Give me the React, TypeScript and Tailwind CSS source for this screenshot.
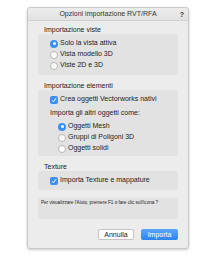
import React from 'react';

const Radio = ({ checked }: { checked?: boolean }) =>
  checked ? (
    <span className="w-[8px] h-[8px] rounded-full bg-[#3b8ff6] flex items-center justify-center shrink-0">
      <span className="w-[3px] h-[3px] rounded-full bg-white" />
    </span>
  ) : (
    <span className="w-[8px] h-[8px] rounded-full bg-white border border-[#b5b5b5] shrink-0" />
  );

const Check = () => (
  <span className="w-[8px] h-[8px] rounded-[2px] bg-[#3b8ff6] flex items-center justify-center shrink-0">
    <svg width="6" height="6" viewBox="0 0 6 6">
      <path d="M1 3.2 L2.4 4.7 L5 1.2" stroke="white" strokeWidth="1" fill="none" />
    </svg>
  </span>
);

const Row = ({ children, indent = '' }: { children: React.ReactNode; indent?: string }) => (
  <div className={`h-[11px] flex items-center gap-[2px] ${indent}`}>{children}</div>
);

export default function App() {
  return (
    <div className="w-[220px] h-[256px] bg-white pl-[27px] pt-[7px]" style={{ fontFamily: '"Liberation Sans", Arial, sans-serif' }}>
      <div className="w-[162px] h-[242px] bg-[#ececec] border border-[#c9c9c9] rounded-[3px] shadow-[0_1px_3px_rgba(0,0,0,0.2)] flex flex-col text-[#222] text-[7px]">
        <div className="h-[13px] shrink-0 bg-gradient-to-b from-[#ececec] to-[#e2e2e2] border-b border-[#d2d2d2] rounded-t-[3px] flex items-center relative">
          <span className="w-full text-center text-[7px] text-[#333]">Opzioni importazione RVT/RFA</span>
          <span className="absolute right-[4px] top-[2px] font-bold text-[7px] text-[#333]">?</span>
        </div>
        <div className="px-[10px] pt-[5px] flex flex-col">
          <div className="h-[8px] leading-[8px] pl-[6px]">Importazione viste</div>
          <div className="h-[41px] bg-[#e2e2e2] rounded-[3px] pt-[4px] pl-[12px]">
            <Row><Radio checked />Solo la vista attiva</Row>
            <Row><Radio />Vista modello 3D</Row>
            <Row><Radio />Viste 2D e 3D</Row>
          </div>

          <div className="h-[8px] leading-[8px] pl-[6px] mt-[7px]">Importazione elementi</div>
          <div className="h-[66px] bg-[#e2e2e2] rounded-[3px] pt-[4px] pl-[12px]">
            <Row><Check />Crea oggetti Vectorworks nativi</Row>
            <div className="h-[11px] flex items-center mt-[3px]">Importa gli altri oggetti come:</div>
            <div className="mt-[2px]">
              <Row indent="pl-[8px]"><Radio checked />Oggetti Mesh</Row>
              <Row indent="pl-[8px]"><Radio />Gruppi di Poligoni 3D</Row>
              <Row indent="pl-[8px]"><Radio />Oggetti solidi</Row>
            </div>
          </div>

          <div className="h-[8px] leading-[8px] pl-[6px] mt-[7px]">Texture</div>
          <div className="h-[19px] bg-[#e2e2e2] rounded-[3px] pt-[4px] pl-[12px]">
            <Row><Check />Importa Texture e mappature</Row>
          </div>

          <div className="h-[21px] bg-[#e2e2e2] rounded-[3px] mt-[8px] pl-[3px] pt-[2px] text-[4.6px] leading-[6px]">
            Per visualizzare l'Aiuto, premere F1 o fare clic sull'icona ?
          </div>

          <div className="flex justify-end gap-[7px] mt-[10px]">
            <button className="w-[36px] h-[11px] bg-white border border-[#c4c4c4] rounded-[2px] text-[7px] leading-[9px] text-[#222]">Annulla</button>
            <button className="w-[37px] h-[11px] bg-gradient-to-b from-[#5fa6fa] to-[#2a83f6] rounded-[2px] text-[7px] leading-[11px] text-white">Importa</button>
          </div>
        </div>
      </div>
    </div>
  );
}
